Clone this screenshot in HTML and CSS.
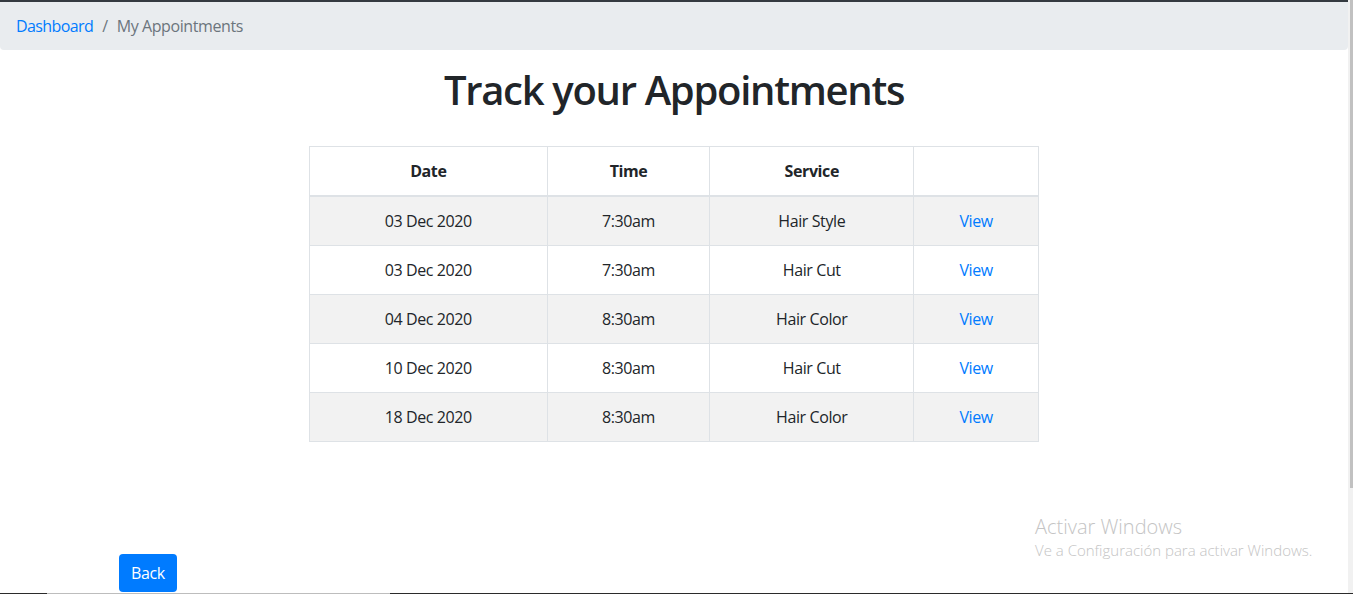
FILE: index.html
```html
<!DOCTYPE html>
<html lang="es">
<head>
<meta charset="utf-8">
<title>My Appointments</title>
<link rel="stylesheet" href="styles.css">
</head>
<body>
<div class="screen">
  <div class="page">
    <div class="topbar"></div>
    <nav class="breadcrumb">
      <a class="crumb-link" href="#">Dashboard</a>
      <span class="crumb-sep">/</span>
      <span class="crumb-active">My Appointments</span>
    </nav>
    <h1 class="title">Track your Appointments</h1>
    <div class="table-wrap">
      <table class="appts">
        <thead>
          <tr><th class="c-date">Date</th><th class="c-time">Time</th><th class="c-service">Service</th><th class="c-action"></th></tr>
        </thead>
        <tbody>
          <tr><td>03 Dec 2020</td><td>7:30am</td><td>Hair Style</td><td><a href="#" class="view">View</a></td></tr>
          <tr><td>03 Dec 2020</td><td>7:30am</td><td>Hair Cut</td><td><a href="#" class="view">View</a></td></tr>
          <tr><td>04 Dec 2020</td><td>8:30am</td><td>Hair Color</td><td><a href="#" class="view">View</a></td></tr>
          <tr><td>10 Dec 2020</td><td>8:30am</td><td>Hair Cut</td><td><a href="#" class="view">View</a></td></tr>
          <tr><td>18 Dec 2020</td><td>8:30am</td><td>Hair Color</td><td><a href="#" class="view">View</a></td></tr>
        </tbody>
      </table>
    </div>
    <div class="container">
      <a href="#" class="btn-back">Back</a>
    </div>
  </div>
  <div class="scrollbar"><div class="thumb"></div></div>
</div>
<div class="taskbar-edge"><div class="seg-dark1"></div><div class="seg-gray"></div><div class="seg-dark2"></div></div>
<div class="watermark">
  <div class="wm-title">Activar Windows</div>
  <div class="wm-sub">Ve a Configuración para activar Windows.</div>
</div>
</body>
</html>
```
FILE: styles.css
```css
* { box-sizing: border-box; }
html, body { margin: 0; padding: 0; }
body {
  width: 1353px;
  height: 594px;
  overflow: hidden;
  background: #fff;
  font-family: "Open Sans", "Noto Sans", sans-serif;
  font-size: 16px;
  line-height: 24px;
  letter-spacing: -0.4px;
  color: #212529;
  position: relative;
}
.screen {
  display: flex;
  height: 593px;
  overflow: hidden;
}
.page {
  width: 1348px;
  display: flex;
  flex-direction: column;
}
.page > * { flex-shrink: 0; }
.topbar {
  height: 2px;
  background: #343a40;
}
.breadcrumb {
  height: 48px;
  background: #e9ecef;
  border-radius: 0 0 4px 4px;
  padding: 12px 16px;
  display: flex;
  align-items: center;
  gap: 9px;
  margin-bottom: 16px;
}
.crumb-link { color: #007bff; text-decoration: none; letter-spacing: -0.6px; }
.crumb-sep { color: #6c757d; }
.crumb-active { color: #6c757d; letter-spacing: -0.4px; }
.title {
  margin: 0 0 32px;
  text-align: center;
  font-size: 40px;
  line-height: 48px;
  font-weight: 600;
  letter-spacing: -1.3px;
  color: #212529;
}
.table-wrap {
  display: flex;
  justify-content: center;
}
.appts {
  width: 730px;
  border-collapse: collapse;
  border: 1px solid #dee2e6;
}
.appts th, .appts td {
  border: 1px solid #dee2e6;
  padding: 12px;
  text-align: center;
  line-height: 24px;
  height: 49px;
}
.appts th {
  font-weight: 700;
  border-bottom: 2px solid #dee2e6;
}
.c-date { width: 238px; }
.c-time { width: 163px; }
.c-service { width: 204px; }
.c-action { width: 125px; }
.appts tbody tr:nth-child(odd) { background: #f2f2f2; }
.view { color: #007bff; text-decoration: none; }
.container {
  width: 1140px;
  margin: 112px auto 0;
  padding: 0 15px;
}
.btn-back {
  display: inline-block;
  background: #007bff;
  color: #fff;
  text-decoration: none;
  padding: 7px 12px;
  line-height: 24px;
  border-radius: 4px;
}
.scrollbar {
  width: 5px;
  background: #f1f1f1;
  display: flex;
  justify-content: flex-end;
}
.thumb {
  width: 3px;
  height: 488px;
  background: #c1c1c1;
}
.taskbar-edge {
  display: flex;
  height: 1px;
}
.seg-dark1 { width: 47px; background: #2b2b2b; }
.seg-gray { width: 343px; background: #bdbdbd; }
.seg-dark2 { flex: 1; background: #2b2b2b; }
.watermark {
  position: absolute;
  left: 1035px;
  top: 514px;
  color: #c4c4c4;
  font-weight: 300;
  letter-spacing: 0;
}
.wm-title { font-size: 20px; line-height: 26px; }
.wm-sub { font-size: 15px; line-height: 20px; }
```
